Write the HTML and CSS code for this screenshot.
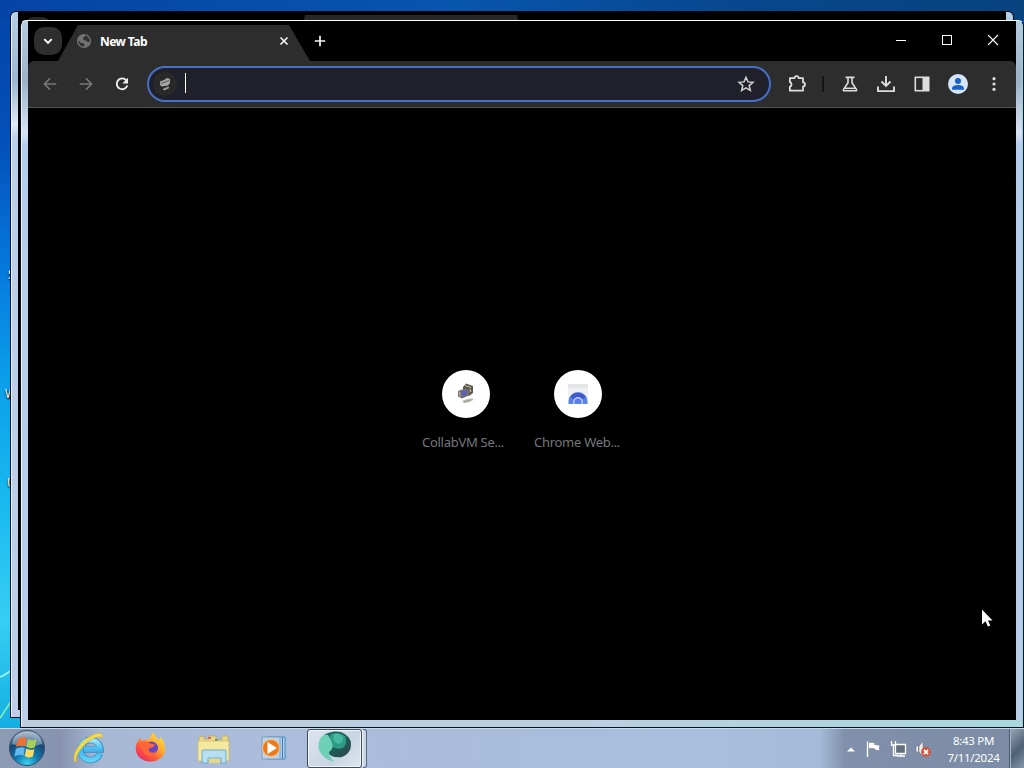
FILE: index.html
```html
<!DOCTYPE html>
<html lang="en">
  <head>
    <meta charset="utf-8">
    <title>New Tab</title>
    <link rel="stylesheet" href="styles.css">
  </head>
  <body>
    <div class="desktop">
      <svg class="wallpaper-rays" width="30" height="80" viewBox="0 0 30 80">
        <path d="M0 22Q5 20 12 15" stroke="#9ff3f0" stroke-width="1.6" fill="none"/>
        <path d="M0 63L14 42" stroke="#8af0b4" stroke-width="1.5" fill="none"/>
      </svg>
      <span class="shortcut-label shortcut-s">S</span>
      <span class="shortcut-label shortcut-w">W</span>
      <span class="shortcut-label shortcut-u">U</span>

      <div class="window window-back">
        <div class="back-page">
          <div class="back-button"></div>
          <div class="back-tab"></div>
        </div>
      </div>

      <div class="window window-front">
        <div class="browser">
          <div class="tab-strip">
            <div class="tab-search">
              <svg width="28" height="28" viewBox="0 0 28 28"><path d="M10.3 12.2l3.7 3.7 3.7-3.7" fill="none" stroke="#fff" stroke-width="1.9"/></svg>
            </div>
            <div class="tab">
              <svg class="tab-icon" width="16" height="16" viewBox="0 0 16 16">
                <circle cx="8" cy="8" r="6.4" fill="#303030" stroke="#717171" stroke-width="1.4"/>
                <path d="M2 5Q4 1.5 8 1.5L9.500 3Q7 4 7 5.500 7 7 9 7.200 11 7.500 11.500 9L14 9Q13 13.500 8.500 14.300L6 14Q9 13 8.500 11.500 8 10 6 10 4 10 3.500 8.500L2 7Z" fill="#717171"/>
              </svg>
              <span class="tab-title">New Tab</span>
              <svg class="tab-close" width="10" height="10" viewBox="0 0 10 10"><path d="M1.5 1.5l7 7M8.5 1.5l-7 7" stroke="#f2f2f2" stroke-width="1.7"/></svg>
            </div>
            <svg class="tab-new" width="12" height="12" viewBox="0 0 12 12"><path d="M6 .8v10.4M.8 6h10.4" stroke="#f5f5f5" stroke-width="1.7"/></svg>
            <div class="window-controls">
              <svg width="46" height="40" viewBox="0 0 46 40"><path d="M18 19.5h10" stroke="#fff"/></svg>
              <svg width="46" height="40" viewBox="0 0 46 40"><rect x="18.5" y="14.5" width="9" height="9" fill="none" stroke="#fff"/></svg>
              <svg width="46" height="40" viewBox="0 0 46 40"><path d="M18 14l10 10M28 14l-10 10" stroke="#fff" stroke-width="1.1"/></svg>
            </div>
          </div>

          <div class="toolbar">
            <div class="nav-buttons">
              <svg width="36" height="20" viewBox="0 0 36 20" fill="none" stroke="#777" stroke-width="1.6"><path d="M24.2 10H12.8M18 4.4L12.4 10l5.6 5.6"/></svg>
              <svg width="36" height="20" viewBox="0 0 36 20" fill="none" stroke="#777" stroke-width="1.6"><path d="M11.8 10h11.4M18 4.4l5.6 5.6-5.6 5.6"/></svg>
              <svg width="36" height="20" viewBox="0 0 36 20"><path d="M22.3 6.3A5.4 5.4 0 1 0 23.3 11.5" fill="none" stroke="#f0f0f0" stroke-width="1.9"/><path d="M24 3.7v5.7h-5.7z" fill="#f0f0f0"/></svg>
            </div>
            <div class="omnibox">
              <div class="site-icon">
                <svg width="14" height="14" viewBox="0 0 14 14">
                  <path d="M2 4.500l4-1.500 3-2 3 1v4L10 8.500 4 9.500 2 8z" fill="#a6a6a6"/>
                  <path d="M3 6.500l8-3" stroke="#555"/>
                  <path d="M4.500 12l6-2.500.8 1.500-5 2.500z" fill="#a0a0a0"/>
                </svg>
              </div>
              <div class="caret"></div>
              <svg class="star" width="18" height="18" viewBox="0 0 18 18"><path d="M9 2.3l2 4.6 5 .4-3.800 3.300 1.200 4.900L9 12.900l-4.400 2.600 1.200-4.900L2 7.300l5-.4z" fill="none" stroke="#cfcfcf" stroke-width="1.5"/></svg>
            </div>
            <div class="toolbar-actions">
              <svg class="extensions" width="20" height="20" viewBox="0 0 20 20"><path d="M2.900 4.100H7.600a2 2 0 0 1 4 0H16v4.300a2 2 0 0 1 0 4v4.300H2.900v-4.100a2.300 2.300 0 0 0 0-4.400z" fill="none" stroke="#ddd" stroke-width="1.8" stroke-linejoin="round"/></svg>
              <div class="divider"></div>
              <svg width="36" height="20" viewBox="0 0 36 20"><path d="M13.5 3.4h9M16 3.5v5.2l-4.5 6.9q-.4 1.1.9 1.1h11.2q1.3 0 .9-1.1L20 8.7V3.5" fill="none" stroke="#ddd" stroke-width="1.6"/><path d="M13 14.3h10" stroke="#ddd" stroke-width="1.5"/></svg>
              <svg width="36" height="20" viewBox="0 0 36 20"><path d="M18 2v9.5M13.500 7.500l4.500 4.500 4.500-4.500M10 12.500v4.600h16v-4.600" fill="none" stroke="#ddd" stroke-width="1.9"/></svg>
              <svg width="36" height="20" viewBox="0 0 36 20"><rect x="11.3" y="3.300" width="13.400" height="13.400" fill="none" stroke="#ddd" stroke-width="1.6"/><path d="M18.500 3h6.500v14h-6.500z" fill="#ddd"/></svg>
              <svg width="36" height="20" viewBox="0 0 36 20"><circle cx="18" cy="10" r="10" fill="#d5e5fc"/><circle cx="18" cy="6.900" r="3" fill="#1b60c9"/><path d="M12 15.700v-1.200Q12.200 11 18 11t6 3.500v1.200z" fill="#1b60c9"/></svg>
              <svg width="36" height="20" viewBox="0 0 36 20" fill="#ddd"><circle cx="18" cy="4.700" r="1.600"/><circle cx="18" cy="10" r="1.600"/><circle cx="18" cy="15.300" r="1.600"/></svg>
            </div>
          </div>

          <div class="page">
            <div class="tile">
              <div class="tile-icon">
                <svg width="24" height="24" viewBox="0 0 24 24">
                  <path d="M9 5l3-3.500 7 2.500v7l-4 3-6-2z" fill="#59594f"/>
                  <path d="M11 3.500l6 2M16 7l1 3" stroke="#d0c98e"/>
                  <path d="M4 9l7-2.500 5 1.500-1 5.500-7 3L4 14.500z" fill="#777168"/>
                  <path d="M7 9.500l6.500-1.700-.8 4.700L8 14.300z" fill="#5c60c4"/>
                  <path d="M4.500 10l1.500.5v4" fill="none" stroke="#c5bdb0"/>
                  <path d="M8 19q5-3 11-2.700l.5 1.400q-5 4-10 3.300z" fill="#c3c3bd"/>
                  <path d="M10 19.800l7-2" stroke="#96968e"/>
                </svg>
              </div>
              <div class="tile-title">CollabVM Se...</div>
            </div>
            <div class="tile">
              <div class="tile-icon">
                <svg width="22" height="22" viewBox="0 0 22 22">
                  <path d="M1 1h20v20H1z" fill="#eef0f1"/>
                  <path d="M1 1h20v4H1z" fill="#e3e5e4"/>
                  <path d="M1.500 21v-2.500a9.500 9.500 0 0 1 19 0V21z" fill="#5c82e6"/>
                  <path d="M3.300 14a9.500 9.500 0 0 1 15.400 0L15 16.500a5 5 0 0 0-8 0z" fill="#4059c8"/>
                  <path d="M6 21v-2a5 5 0 0 1 10 0v2z" fill="#b8c9f7"/>
                  <path d="M7.500 21v-2a3.500 3.500 0 0 1 7 0v2z" fill="#5b7fe8"/>
                </svg>
              </div>
              <div class="tile-title">Chrome Web...</div>
            </div>
          </div>
        </div>
      </div>

      <div class="taskbar">
        <div class="start">
          <svg width="38" height="38" viewBox="0 0 38 38">
            <defs>
              <radialGradient id="orb" cx=".5" cy=".95" r=".95"><stop offset="0" stop-color="#35d5f5"/><stop offset=".35" stop-color="#137bb0"/><stop offset=".7" stop-color="#174772"/><stop offset="1" stop-color="#9cacc0"/></radialGradient>
            </defs>
            <circle cx="19" cy="19" r="17.500" fill="url(#orb)" stroke="#354f6a"/>
            <path d="M4 15Q6 3 19 2.500T34 15Q19 20 4 15z" fill="#dce8ee" opacity=".42"/>
            <path d="M10 10q4.500-3 8.500-.8l-1.300 8q-4.500-1.800-9 .8z" fill="#ee7135"/>
            <path d="M20 10q4 2.500 8.500.3l-1.700 8q-4.200 2.200-8.300-.6z" fill="#a5cf55"/>
            <path d="M7.800 19.800q4.500-2.600 9-.9l-1.400 7.800q-4-2-8.800.7z" fill="#65b9ef"/>
            <path d="M18.200 19.400q4 2.600 8.200.5l-1.500 7.600q-4.500 2.200-8.200-.4z" fill="#ffd958"/>
          </svg>
        </div>
        <div class="pinned">
          <svg width="34" height="36" viewBox="0 0 34 36">
            <defs><linearGradient id="ie" x2="0" y2="1"><stop stop-color="#9ce9ff"/><stop offset=".5" stop-color="#44b5ed"/><stop offset="1" stop-color="#60d2f5"/></linearGradient></defs>
            <path d="M28 22.500A10 10 0 1 1 28.600 18.500H12" fill="none" stroke="#3a8ec4" stroke-width="6.500"/>
            <path d="M27.700 22.500A10 10 0 1 1 28.300 18.200H12" fill="none" stroke="url(#ie)" stroke-width="5"/>
            <path d="M3 31C0 27 3 18 10 11.500S27 0 30 3.500c1 1 .5 3 0 3.500C27 4 19 7.500 12.500 14S2.500 28 5 31z" fill="#f3dc4a" stroke="#c5a536" stroke-width=".5"/>
          </svg>
          <svg width="34" height="36" viewBox="0 0 34 36">
            <defs><linearGradient id="fox" x1="1" x2=".2" y2="1"><stop stop-color="#fff24a"/><stop offset=".45" stop-color="#ffa62b"/><stop offset=".72" stop-color="#ff553d"/><stop offset="1" stop-color="#e72668"/></linearGradient></defs>
            <path d="M4 10q1-2 2.500-3 0 2 2 3Q12 8 16 8q.5-5 4-6.500Q20.500 6 25 9l2-3q4.500 7 4 14A14.700 13 0 0 1 2 20Q1 14 4 10z" fill="url(#fox)"/>
            <circle cx="17.500" cy="17" r="6.500" fill="#6644cd"/>
            <path d="M7 11q5-2 9 1.500l5 1q-1 3-5 3.500-2 1-1.500 2.500 3 4 7.500.5-2 6-8.500 5Q7 23 7 11z" fill="#ff6538"/>
          </svg>
          <svg width="34" height="36" viewBox="0 0 34 36">
            <path d="M3 6l5-1v3h5V5h7v4h6V5h6v23H3z" fill="#ead98c" stroke="#bda759" stroke-width=".7"/>
            <path d="M12 6h3v2h-3z" fill="#d86857"/><path d="M19 8h3v2h-3z" fill="#769554"/>
            <path d="M2 10h31v20H2z" fill="#f5e99f" stroke="#cbb45d" stroke-width=".7"/>
            <path d="M6 20q0-1 1-1h22q1 0 1 1v12h-5v-5H12v5H6z" fill="#b6e0f2" stroke="#6ea8cf"/>
            <path d="M13 28h11v4H13z" fill="#e2d98d"/>
          </svg>
          <svg width="34" height="36" viewBox="0 0 34 36">
            <path d="M9 6h18v22H9z" fill="#b8d5ec" stroke="#4c88ba"/>
            <path d="M24.500 6.500v21" stroke="#3f7fbb" stroke-width="1.200"/>
            <path d="M4 6h18v22H4z" fill="#bfd2e4" stroke="#7ba1c2"/>
            <circle cx="13" cy="17" r="8.500" fill="#ed7a1b" stroke="#f7c58c"/>
            <path d="M9.500 11v12l9.500-6z" fill="#fff"/>
          </svg>
        </div>
        <div class="task-active">
          <svg width="36" height="34" viewBox="0 0 36 34">
            <defs><linearGradient id="swirl" x2="1" y2="1"><stop stop-color="#1c685e"/><stop offset=".5" stop-color="#1f5e57"/><stop offset="1" stop-color="#2d4548"/></linearGradient></defs>
            <path d="M7 5Q15 0 24 2q10 4 10 12.500 0 9-9 12.500-10 2-18-7z" fill="url(#swirl)"/>
            <path d="M14 4q8-3 14 2 3 7-2 12-7 2-12-2-4-6 0-12z" fill="#2c9c87"/>
            <path d="M17 4q6-1 9 3 1 5-4 7-5-1-6-5z" fill="#45b89e"/>
            <path d="M5 6Q0 12 2 20q4 9 15 12-5-6-5-10 5-3 3-9-2-5-4-8-3-1-6 1z" fill="#6fd0b8"/>
          </svg>
        </div>
        <div class="task-stack"></div>

        <div class="tray">
          <svg class="tray-arrow" width="8" height="5" viewBox="0 0 8 5"><path d="M0 4.500L4 .5l4 4z" fill="#fff"/></svg>
          <svg width="18" height="18" viewBox="0 0 18 18"><path d="M2.500 1.500V17" stroke="#fff" stroke-width="1.400"/><path d="M3.500 2.500h6v2l5.500 1-1 2.500 1 2.500-5-.5-.5-1.500h-6z" fill="#fff" stroke="#5b6376" stroke-width=".4"/></svg>
          <svg width="18" height="18" viewBox="0 0 18 18"><path d="M5.500 4.500h10v9h-10z" fill="#626f7e" stroke="#fff" stroke-width="1.300"/><path d="M1.500 1v4h4V1M3.500 5v10.500H8M7 16h8M11 13v3" fill="none" stroke="#fff" stroke-width="1.300"/></svg>
          <svg width="18" height="18" viewBox="0 0 18 18"><path d="M1 6h2.500v6H1zM4 6l4-4.500v15L4 12z" fill="#f3ede9" stroke="#616a7a" stroke-width=".5"/><circle cx="11" cy="12" r="5" fill="#cf5644"/><path d="M8.900 9.900l4.200 4.200M13.100 9.900l-4.200 4.200" stroke="#fff" stroke-width="1.600"/></svg>
        </div>
        <div class="clock">
          <div>8:43 PM</div>
          <div>7/11/2024</div>
        </div>
        <div class="show-desktop"></div>
      </div>

      <svg class="cursor" width="12" height="19" viewBox="0 0 12 19"><path d="M1 .5v15l3.500-3.200 2.400 5.200 2.400-1.100L7 11.500h4.500z" fill="#fff"/></svg>
    </div>
  </body>
</html>
```

FILE: styles.css
```css
* {
  box-sizing: border-box;
}

body {
  margin: 0;
  font-family: "Noto Sans", "Open Sans", sans-serif;
}

svg {
  display: block;
  flex: none;
}

.desktop {
  position: relative;
  display: flex;
  flex-direction: column;
  justify-content: flex-end;
  width: 1024px;
  height: 768px;
  overflow: hidden;
  background:
    linear-gradient(90deg, #0444a6, #0855ae 45%, #07488f 70%, #08427f) 0 0 / 100% 20px no-repeat,
    linear-gradient(#0444a6, #0450b8 140px, #0576dc 260px, #0b9ce9 370px, #18b9ef 500px, #38cdf3 620px, #13aee1 730px);
}

.wallpaper-rays {
  position: absolute;
  left: 0;
  top: 655px;
}

.shortcut-label {
  position: absolute;
  color: #fff;
  font-size: 12px;
  line-height: 16px;
  text-shadow: 0 1px 2px #000, 1px 1px 1px #000;
}

.shortcut-s {
  left: 8px;
  top: 267px;
}

.shortcut-w {
  left: 5px;
  top: 386px;
}

.shortcut-u {
  left: 7px;
  top: 475px;
}

/* windows */

.window {
  position: absolute;
  border: 1px solid #06131f;
}

.window-back {
  left: 10px;
  top: 11px;
  width: 1004px;
  height: 707px;
  padding: 0 7px 7px;
  border-top-color: #02040c;
  border-radius: 6px 6px 0 0;
  background: linear-gradient(#b5cfe6, #9db7cf 70px, #e0e9f6 112px, #bdcee9 126px, #bdcde8);
  box-shadow: inset 1px 0 #e7f1fc;
}

.back-page {
  display: flex;
  height: 100%;
  background: #000;
}

.back-button {
  width: 28px;
  height: 28px;
  margin: 5px 0 0 6px;
  border-radius: 10px;
  background: #282828;
}

.back-tab {
  width: 220px;
  height: 20px;
  margin: 3px 0 0 249px;
  background: #292727;
  clip-path: polygon(4px 0, 216px 0, 220px 20px, 0 20px);
}

.window-front {
  left: 20px;
  top: 20px;
  width: 1004px;
  height: 708px;
  padding: 0 7px 7px;
  border-top-color: #fff;
  border-radius: 6px 6px 0 0;
  background:
    linear-gradient(90deg, #bccde0, #b8d0e1 60%, #a9d7dd) 0 100% / 100% 7px no-repeat,
    linear-gradient(#b6cbdd, #9cb3c9 60px, #d9e4f3 112px, #b5cdec 125px, #b8cee9);
  box-shadow: inset 1px 0 #e6f3ff, inset -1px 0 #91d4e4;
}

/* browser */

.browser {
  display: flex;
  flex-direction: column;
  height: 699px;
  background: #000;
}

.tab-strip {
  display: flex;
  height: 40px;
}

.tab-search {
  width: 28px;
  height: 28px;
  margin: 6px 0 0 6px;
  border-radius: 10px;
  background: #2e2e2e;
}

.tab {
  display: flex;
  align-items: center;
  width: 252px;
  height: 36px;
  margin: 4px 0 0 -4px;
  padding: 0 21px 4px 18px;
  background: #2d2d2d;
  clip-path: polygon(20px 0, 231px 0, 252px 36px, 0 36px);
}

.tab-title {
  margin-left: 8px;
  color: #fff;
  font-size: 12px;
  font-weight: 700;
  letter-spacing: -0.55px;
}

.tab-close {
  margin-left: auto;
}

.tab-new {
  margin: 14px 0 0 4px;
}

.window-controls {
  display: flex;
  margin-left: auto;
}

.toolbar {
  display: flex;
  align-items: center;
  height: 47px;
  border-bottom: 1px solid #555;
  border-radius: 6px 6px 0 0;
  background: #2d2d2d;
}

.nav-buttons {
  display: flex;
  margin-left: 4px;
}

.omnibox {
  display: flex;
  align-items: center;
  width: 624px;
  height: 36px;
  margin-left: 7px;
  border: 2px solid #466fc6;
  border-radius: 18px;
  background: #20202a;
}

.site-icon {
  display: flex;
  align-items: center;
  justify-content: center;
  width: 24px;
  height: 24px;
  margin-left: 4px;
  border-radius: 50%;
  background: #292929;
}

.caret {
  width: 1px;
  height: 20px;
  margin: -3px 0 0 8px;
  background: #fff;
}

.star {
  margin: 0 14px 0 auto;
}

.toolbar-actions {
  display: flex;
  align-items: center;
  margin-left: auto;
  margin-right: 4px;
}

.divider {
  width: 2px;
  height: 16px;
  margin: 0 8px 0 15px;
  background: #151515;
}

.page {
  display: flex;
  flex: 1;
  justify-content: center;
  padding-top: 262px;
}

.tile {
  display: flex;
  flex-direction: column;
  align-items: center;
  width: 112px;
}

.tile-icon {
  display: flex;
  align-items: center;
  justify-content: center;
  width: 48px;
  height: 48px;
  border-radius: 50%;
  background: #fff;
}

.tile-title {
  width: 88px;
  margin-top: 15px;
  color: #73777b;
  font-size: 13px;
  line-height: 18px;
  letter-spacing: -0.28px;
  white-space: nowrap;
}

/* taskbar */

.taskbar {
  display: flex;
  height: 40px;
  border-top: 1px solid #c7d8e9;
  background: linear-gradient(90deg, #8d9bb5, #8793ae 60px, #a7b8d5 100px, #aabddb 280px, #a8bedc 720px, #a3bbd8 820px, #8090aa 845px, #7d8ca5);
}

.start {
  width: 72px;
  padding-left: 8px;
}

.pinned {
  display: flex;
  gap: 28px;
  padding-top: 2px;
}

.task-active {
  display: flex;
  justify-content: center;
  width: 55px;
  height: 39px;
  margin-left: 15px;
  border: 1px solid #3e4b59;
  border-radius: 3px;
  background: linear-gradient(135deg, #dce4ef, #c9d5e3 60%, #dee6ee);
  box-shadow: inset 0 0 0 1px #f1f5fb;
}

.task-stack {
  width: 5px;
  height: 39px;
  border: 1px solid #56677c;
  border-left-color: #eff5fb;
  border-radius: 0 3px 3px 0;
  background: #cbd7e7;
}

.tray {
  display: flex;
  align-items: center;
  gap: 7px;
  height: 40px;
  margin-left: auto;
}

.tray-arrow {
  margin-right: 3px;
}

.clock {
  width: 76px;
  padding: 3px 0 0 5px;
  color: #fff;
  font-size: 11.5px;
  line-height: 17px;
  letter-spacing: -0.3px;
  text-align: center;
}

.show-desktop {
  width: 15px;
  border-left: 1px solid #4d5b6e;
  background: linear-gradient(135deg, #9aa6b6, #4d6075 55%, #8798aa);
  box-shadow: inset 1px 0 #a5b4c8;
}

.cursor {
  position: absolute;
  left: 981px;
  top: 609px;
}
```
